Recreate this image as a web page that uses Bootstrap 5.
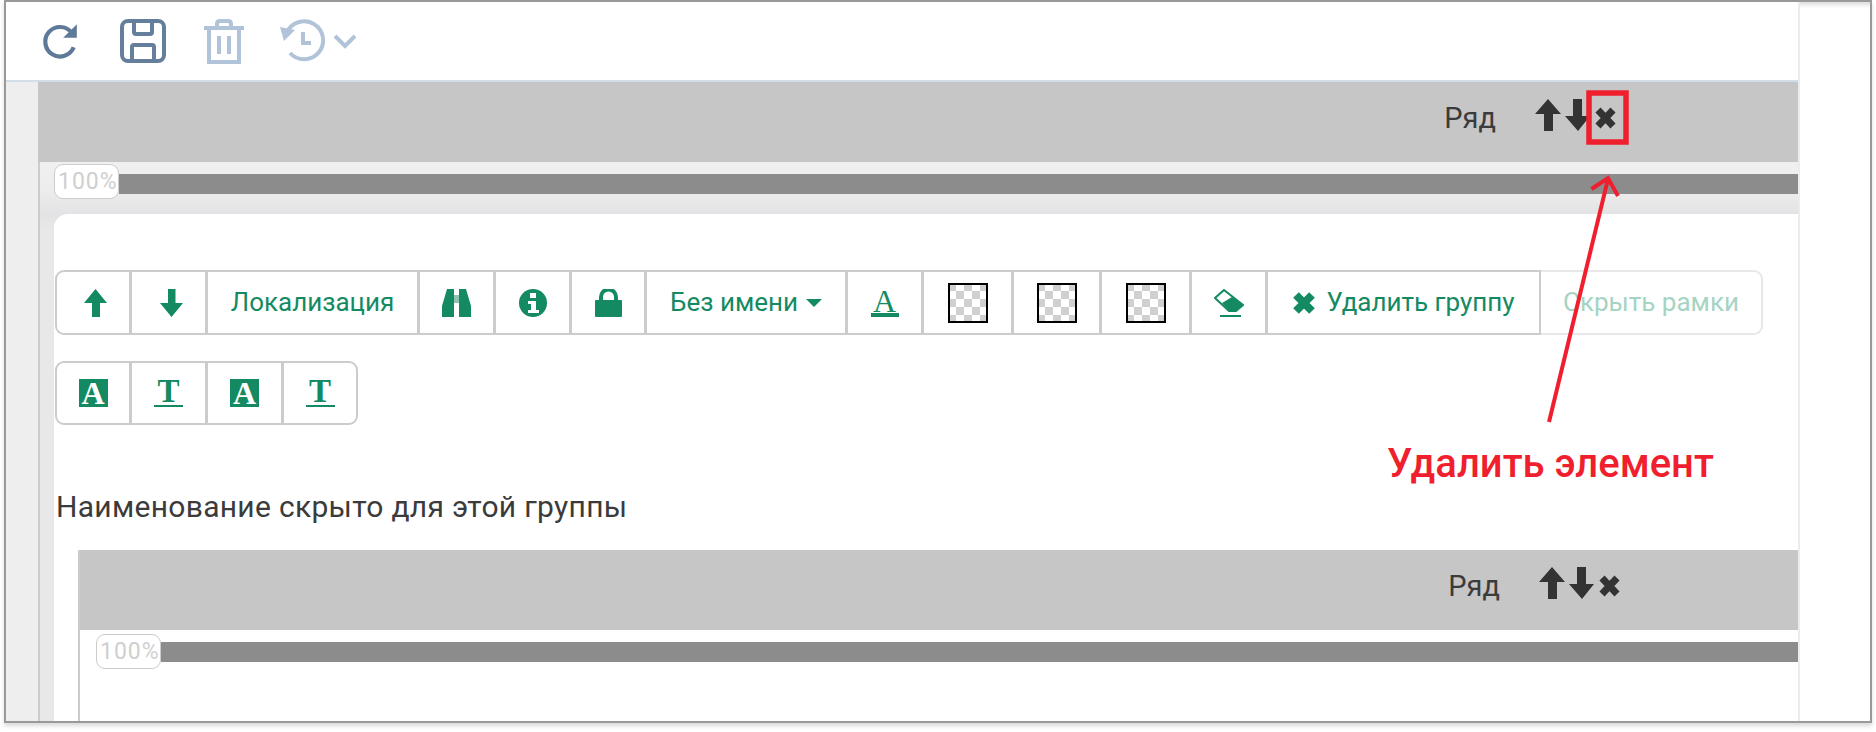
<!DOCTYPE html>
<html lang="ru">
<head>
    <meta charset="UTF-8">
    <meta name="viewport" content="width=device-width, initial-scale=1.0">
    <title>Удалить элемент</title>
    <link href="https://cdn.jsdelivr.net/npm/bootstrap@5.3.0/dist/css/bootstrap.min.css" rel="stylesheet">
    <script src="https://cdn.jsdelivr.net/npm/bootstrap@5.3.0/dist/js/bootstrap.bundle.min.js"></script>
    <style>
        html, body { height: 732px; overflow: hidden; }
        body { position: relative; background: #fff; font-family: Roboto, "Liberation Sans", sans-serif; color: #3b3b3b; }
        .shot-frame { margin-left: 4px; width: 1868px; height: 723px; border: 2px solid #999; box-shadow: 0 3px 4px rgba(0,0,0,.15); overflow: hidden; }
        .main-pane { width: 1792px; flex: none; }
        .side-pane { border-left: 2px solid #ececec; box-shadow: inset 0 6px 4px -3px #ddd; }
        .tool-bar { height: 80px; flex: none; border-bottom: 2px solid #d2dde9; padding-left: 35px; }
        .t-save { margin-left: 41px; }
        .t-trash { margin-left: 37px; }
        .t-hist { margin-left: 34px; }
        .side-strip { width: 32px; flex: none; background: #eee; }
        .work-col { min-width: 0; }
        .row-head { height: 80px; flex: none; background: #c6c6c6; padding-right: 182px; padding-bottom: 14px; font-size: 29px; }
        .row-head .row-name { margin-right: 39px; padding-top: 8px; }
        .row-head .row-ico { display: block; }
        .row-head .row-close { margin-top: 5px; }
        .row-head.inner-head { padding-right: 178px; }
        .outer-body { border-left: 2px solid #ccc; padding-left: 14px; background: linear-gradient(#f0f0f0 0, #ececec 30px, #e3e3e5 52px, #e8e8e8 70px); }
        .pct-line { padding-top: 2px; height: 52px; }
        .pct-pill { width: 65px; height: 35px; flex: none; background: #fff; border: 1px solid #ccc; border-radius: 9px; color: #cfcfcf; font-size: 23px; letter-spacing: 1px; line-height: 33px; padding-left: 3px; white-space: nowrap; position: relative; }
        .pct-bar { height: 20px; background: #8c8c8c; margin-top: 10px; }
        .group-card { background: #fff; border-top-left-radius: 14px; padding: 56px 0 0 1px; }
        .tb-group { display: flex; height: 65px; }
        .tb-group + .tb-group { margin-top: 26px; height: 64px; }
        .tb-btn { display: flex; align-items: center; justify-content: center; gap: 8px; padding: 0; flex: none; background: #fff; border: 2px solid #ccc; border-radius: 0; margin-left: -1px; color: #148a63; font-size: 26px; white-space: nowrap; }
        .tb-btn:first-child { border-top-left-radius: 9px; border-bottom-left-radius: 9px; margin-left: 0; }
        .tb-btn:last-child { border-top-right-radius: 9px; border-bottom-right-radius: 9px; }
        .tb-off { color: #a5d4c2; border-color: #e8e8e8; border-left: 0; margin-left: 0; }
        .tb-nudge { padding-left: 5px; }
        .tb-wide { gap: 10px; }
        .b-76 { width: 76px; } .b-77 { width: 77px; } .b-213 { width: 213px; } .b-202 { width: 202px; }
        .b-91 { width: 91px; } .b-89 { width: 89px; } .b-275 { width: 275px; } .b-222 { width: 222px; }
        .check-box { width: 40px; height: 40px; border: 2px solid #000; background: repeating-conic-gradient(#d0d0d0 0 25%, #fff 0 50%) 6px -2px / 16px 16px; }
        .tint-a { width: 29px; height: 28px; background: #148a63; color: #fff; font: bold 32px/29px "Liberation Serif", serif; text-align: center; }
        .line-t { width: 29px; color: #148a63; font: bold 33px/25px "Liberation Serif", serif; text-align: center; border-bottom: 2px solid #148a63; padding-bottom: 1px; }
        .line-a { width: 28px; color: #148a63; font: 32px/24px "Liberation Serif", serif; text-align: center; border-bottom: 4px solid #148a63; }
        .group-note { margin: 0; padding-top: 64px; height: 125px; font-size: 30px; letter-spacing: .3px; line-height: 36px; margin-left: 1px; }
        .inner-wrap { margin-left: 23px; border-left: 2px solid #ccc; }
        .inner-line { padding-left: 16px; padding-top: 4px; min-height: 120px; }
        .inner-line .pct-bar { margin-top: 8px; }
        .callout-art { position: absolute; left: 0; top: 0; pointer-events: none; }
        .callout-text { position: absolute; left: 1387px; top: 442px; font-family: Roboto, sans-serif; font-weight: 500; font-size: 40px; line-height: 44px; color: #f01f2e; margin: 0; white-space: nowrap; }
    </style>
</head>
<body>
<div class="shot-frame d-flex">
    <div class="main-pane d-flex flex-column">
        <!-- top toolbar -->
        <div class="tool-bar d-flex align-items-center">
            <svg width="38" height="40" viewBox="0 0 36 38"><path d="M31 25a14 14 0 1 1-2-14" fill="none" stroke="#5f7a99" stroke-width="4"/><path d="M34 3v13H21z" fill="#5f7a99"/></svg>
            <svg class="t-save" width="46" height="44" viewBox="0 0 46 44"><path d="M8 2h30a6 6 0 0 1 6 6v28a6 6 0 0 1-6 6H8a6 6 0 0 1-6-6V8a6 6 0 0 1 6-6z" fill="none" stroke="#647f9c" stroke-width="4"/><path d="M14 3v10a2 2 0 0 0 2 2h14a2 2 0 0 0 2-2V3M12 41V28a2 2 0 0 1 2-2h18a2 2 0 0 1 2 2v13" fill="none" stroke="#647f9c" stroke-width="4"/></svg>
            <svg class="t-trash" width="42" height="46" viewBox="0 0 42 46"><path d="M1 10h40M14 9V6q0-3 3-3h8q3 0 3 3v3M6 10v34h30V10M16 18v18M26 18v18" fill="none" stroke="#b0c3d9" stroke-width="4"/></svg>
            <div class="t-hist d-flex align-items-center gap-2">
                <svg width="46" height="44" viewBox="0 0 46 44"><path d="M8 13a19 19 0 1 1 3 21" fill="none" stroke="#b0c3d9" stroke-width="4"/><path d="M1 8l15 3-11 11z" fill="#b0c3d9"/><path d="M24 13v11h8" fill="none" stroke="#b0c3d9" stroke-width="4"/></svg>
                <svg width="24" height="16" viewBox="0 0 24 16"><path d="M2 3l10 10L22 3" fill="none" stroke="#b0c3d9" stroke-width="4"/></svg>
            </div>
        </div>
        <div class="d-flex flex-grow-1">
            <div class="side-strip"></div>
            <div class="work-col flex-grow-1">
                <!-- outer row -->
                <div class="row-head d-flex justify-content-end align-items-center">
                    <span class="row-name">Ряд</span>
                    <svg class="row-ico" width="26" height="32" viewBox="0 0 26 32"><path d="M13 0l13 15h-8v17H9V15H0z" fill="#333"/></svg>
                    <svg class="row-ico ms-1" width="26" height="32" viewBox="0 0 26 32"><path d="M13 32L0 17h8V0h9v17h8z" fill="#333"/></svg>
                    <svg class="row-ico row-close ms-1" width="21" height="22" viewBox="0 0 21 22"><path d="M3 3l15 16M18 3L3 19" stroke="#333" stroke-width="7"/></svg>
                </div>
                <div class="outer-body">
                    <div class="pct-line d-flex align-items-start">
                        <div class="pct-pill">100%</div>
                        <div class="pct-bar flex-grow-1"></div>
                    </div>
                    <div class="group-card">
                        <div class="tb-group">
                            <button type="button" class="tb-btn tb-nudge b-76"><svg width="23" height="28" viewBox="0 0 23 28"><path d="M11.500 0l11.500 14h-7v14H8V14H0z" fill="#148a63"/></svg></button>
                            <button type="button" class="tb-btn tb-nudge b-77"><svg width="23" height="28" viewBox="0 0 23 28"><path d="M11.500 28L0 14h8V0h7.500v14H23z" fill="#148a63"/></svg></button>
                            <button type="button" class="tb-btn b-213">Локализация</button>
                            <button type="button" class="tb-btn b-77"><svg width="29" height="28" viewBox="0 0 29 28"><path d="M12 6h5v8h-5z" fill="#8fc4b0"/><path d="M5 0h7v28H0V17zM17 0h7l5 17v11H17z" fill="#148a63"/></svg></button>
                            <button type="button" class="tb-btn b-77"><svg width="28" height="28" viewBox="0 0 28 28"><circle cx="14" cy="14" r="14" fill="#148a63"/><path d="M11 4h6v5h-6zM9 12h8v9h3v3H9v-3h3v-6H9z" fill="#fff"/></svg></button>
                            <button type="button" class="tb-btn b-76"><svg width="27" height="28" viewBox="0 0 27 28"><path d="M6 12V8a7.500 7.500 0 0 1 15 0v4" fill="none" stroke="#148a63" stroke-width="4"/><rect y="11" width="27" height="17" rx="1" fill="#148a63"/></svg></button>
                            <button type="button" class="tb-btn b-202">Без имени<svg width="16" height="8" viewBox="0 0 16 8"><path d="M0 0h16L8 8z" fill="#148a63"/></svg></button>
                            <button type="button" class="tb-btn b-77"><span class="line-a">A</span></button>
                            <button type="button" class="tb-btn b-91"><span class="check-box"></span></button>
                            <button type="button" class="tb-btn b-89"><span class="check-box"></span></button>
                            <button type="button" class="tb-btn b-91"><span class="check-box"></span></button>
                            <button type="button" class="tb-btn b-77"><svg width="30" height="28" viewBox="0 0 30 28"><path d="M10 1L1 9l14 13h7l7-6z" fill="#fff" stroke="#148a63" stroke-width="2"/><path d="M18 8l11 8-7 6h-7l-7-8z" fill="#148a63"/><path d="M6 27h21" stroke="#148a63" stroke-width="2"/></svg></button>
                            <button type="button" class="tb-btn tb-wide b-275"><svg width="24" height="24" viewBox="0 0 24 24"><path d="M4 4l16 16M20 4L4 20" stroke="#148a63" stroke-width="8"/></svg>Удалить группу</button>
                            <button type="button" class="tb-btn tb-off b-222">Скрыть рамки</button>
                        </div>
                        <div class="tb-group">
                            <button type="button" class="tb-btn b-76"><span class="tint-a">A</span></button>
                            <button type="button" class="tb-btn b-77"><span class="line-t">T</span></button>
                            <button type="button" class="tb-btn b-77"><span class="tint-a">A</span></button>
                            <button type="button" class="tb-btn b-76"><span class="line-t">T</span></button>
                        </div>
                        <p class="group-note">Наименование скрыто для этой группы</p>
                        <!-- nested row -->
                        <div class="inner-wrap">
                            <div class="row-head inner-head d-flex justify-content-end align-items-center">
                                <span class="row-name">Ряд</span>
                                <svg class="row-ico" width="26" height="32" viewBox="0 0 26 32"><path d="M13 0l13 15h-8v17H9V15H0z" fill="#333"/></svg>
                                <svg class="row-ico ms-1" width="26" height="32" viewBox="0 0 26 32"><path d="M13 32L0 17h8V0h9v17h8z" fill="#333"/></svg>
                                <svg class="row-ico row-close ms-1" width="21" height="22" viewBox="0 0 21 22"><path d="M3 3l15 16M18 3L3 19" stroke="#333" stroke-width="7"/></svg>
                            </div>
                            <div class="inner-line d-flex align-items-start">
                                <div class="pct-pill">100%</div>
                                <div class="pct-bar flex-grow-1"></div>
                            </div>
                        </div>
                    </div>
                </div>
            </div>
        </div>
    </div>
    <div class="side-pane flex-grow-1"></div>
</div>

<!-- red annotation over the screenshot -->
<svg class="callout-art" width="1876" height="732" viewBox="0 0 1876 732">
    <rect x="1589" y="93" width="37" height="49" fill="none" stroke="#f01f2e" stroke-width="5.500"/>
    <path d="M1549 422L1608 179M1591.500 189L1608 178l10 18" fill="none" stroke="#f01f2e" stroke-width="4"/>
</svg>
<p class="callout-text">Удалить элемент</p>
</body>
</html>
